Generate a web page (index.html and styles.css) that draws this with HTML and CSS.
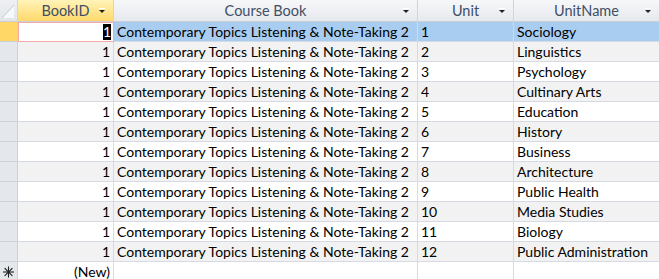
FILE: index.html
```html
<!DOCTYPE html>
<html>
<head>
<meta charset="utf-8">
<link rel="stylesheet" href="styles.css">
</head>
<body>
<div class="sheet">
  <div class="hd corner"><svg width="17" height="21" viewBox="0 0 17 21"><polygon points="14,5 14,18 2,18" fill="#f7f8fa"/><line x1="2" y1="18" x2="14" y2="5" stroke="#c6cbd3" stroke-width="1"/></svg></div>
  <div class="hd sel-col">BookID<span class="arrow"></span></div>
  <div class="hd">Course Book<span class="arrow"></span></div>
  <div class="hd">Unit<span class="arrow"></span></div>
  <div class="hd">UnitName<span class="arrow"></span></div>

  <div class="rs cur"></div>
  <div class="c num current"><span class="hl">1</span></div>
  <div class="c picked">Contemporary Topics Listening &amp; Note-Taking 2</div>
  <div class="c picked">1</div>
  <div class="c picked">Sociology</div>

  <div class="rs"></div><div class="c num alt">1</div><div class="c alt">Contemporary Topics Listening &amp; Note-Taking 2</div><div class="c alt">2</div><div class="c alt">Linguistics</div>
  <div class="rs"></div><div class="c num">1</div><div class="c">Contemporary Topics Listening &amp; Note-Taking 2</div><div class="c">3</div><div class="c">Psychology</div>
  <div class="rs"></div><div class="c num alt">1</div><div class="c alt">Contemporary Topics Listening &amp; Note-Taking 2</div><div class="c alt">4</div><div class="c alt">Cultinary Arts</div>
  <div class="rs"></div><div class="c num">1</div><div class="c">Contemporary Topics Listening &amp; Note-Taking 2</div><div class="c">5</div><div class="c">Education</div>
  <div class="rs"></div><div class="c num alt">1</div><div class="c alt">Contemporary Topics Listening &amp; Note-Taking 2</div><div class="c alt">6</div><div class="c alt">History</div>
  <div class="rs"></div><div class="c num">1</div><div class="c">Contemporary Topics Listening &amp; Note-Taking 2</div><div class="c">7</div><div class="c">Business</div>
  <div class="rs"></div><div class="c num alt">1</div><div class="c alt">Contemporary Topics Listening &amp; Note-Taking 2</div><div class="c alt">8</div><div class="c alt">Architecture</div>
  <div class="rs"></div><div class="c num">1</div><div class="c">Contemporary Topics Listening &amp; Note-Taking 2</div><div class="c">9</div><div class="c">Public Health</div>
  <div class="rs"></div><div class="c num alt">1</div><div class="c alt">Contemporary Topics Listening &amp; Note-Taking 2</div><div class="c alt">10</div><div class="c alt">Media Studies</div>
  <div class="rs"></div><div class="c num">1</div><div class="c">Contemporary Topics Listening &amp; Note-Taking 2</div><div class="c">11</div><div class="c">Biology</div>
  <div class="rs"></div><div class="c num alt">1</div><div class="c alt">Contemporary Topics Listening &amp; Note-Taking 2</div><div class="c alt">12</div><div class="c alt">Public Administration</div>

  <div class="rs newrow"><svg width="17" height="19" viewBox="0 0 17 19"><g stroke="#222" stroke-width="1.1" stroke-linecap="square"><line x1="8.5" y1="5" x2="8.5" y2="15"/><line x1="3.5" y1="10" x2="13.5" y2="10"/><line x1="5" y1="6.5" x2="12" y2="13.5"/><line x1="12" y1="6.5" x2="5" y2="13.5"/></g></svg></div><div class="c num">(New)</div><div class="c"></div><div class="c"></div><div class="c"></div>
</div>
</body>
</html>
```
FILE: styles.css
```css
html, body {
  margin: 0;
  padding: 0;
  background: #ffffff;
  overflow: hidden;
}
.sheet {
  display: grid;
  grid-template-columns: 18px 96px 304px 96px 146px;
  grid-template-rows: 22px;
  grid-auto-rows: 20px;
  font-family: "Lato", "Open Sans", sans-serif;
  font-size: 14px;
  color: #000;
  width: 660px;
}
.sheet > div {
  box-sizing: border-box;
  border-right: 1px solid #d5dae3;
  border-bottom: 1px solid #d5dae3;
  white-space: nowrap;
  overflow: hidden;
}
.hd {
  position: relative;
  background: linear-gradient(#f6f7f9, #e6e9ed);
  border-right-color: #d0d5dd !important;
  border-bottom-color: #c9ced6 !important;
  color: #3f4f66;
  text-align: center;
  line-height: 21px;
  font-size: 14.5px;
}
.hd.sel-col {
  background: linear-gradient(#fff3b8, #ffd96b);
}
.corner {
  background: linear-gradient(#eef0f3, #e1e5ea);
}
.corner svg { display: block; }
.arrow {
  position: absolute;
  right: 8px;
  top: 10px;
  width: 0;
  height: 0;
  border-left: 3px solid transparent;
  border-right: 3px solid transparent;
  border-top: 3px solid #222;
}
.arrow::before {
  content: "";
  position: absolute;
  left: -3px;
  top: -5px;
  width: 6px;
  height: 1px;
  background: #ffffff;
}
.rs {
  background: #e4e7ec;
  border-right-color: #cdd2da !important;
  border-bottom-color: #cdd2da !important;
}
.rs.cur {
  background: #ffd767;
}
.newrow svg { display: block; }
.c {
  line-height: 19px;
  padding: 0 3px;
  background: #ffffff;
}
.c.alt { background: #f2f2f2; }
.c.num { text-align: right; }
.c.picked { background: #a8cdf1; }
.c.current {
  background: #ffffff;
  border-color: #f5a9a9 !important;
  box-shadow: inset 1px 1px 0 #f5a9a9;
  padding-right: 2px;
}
.hl {
  display: inline-block;
  background: #000;
  color: #fff;
  line-height: 16px;
  padding: 0 0px;
}
```
